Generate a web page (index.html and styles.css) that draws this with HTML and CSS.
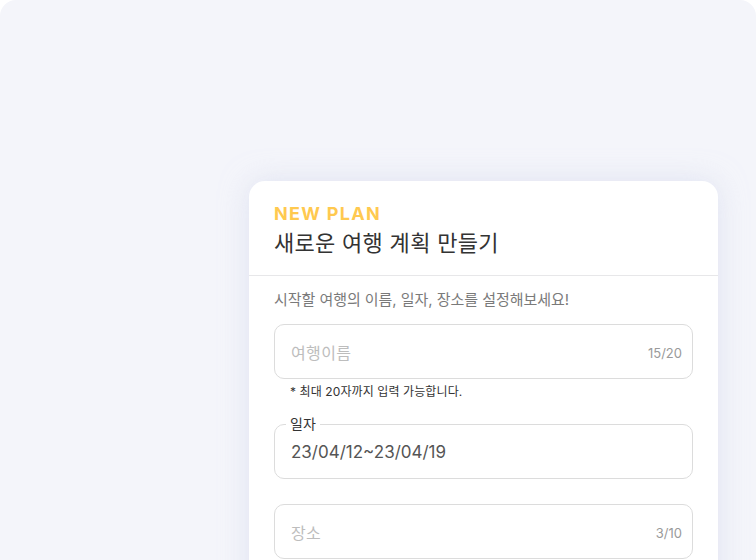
FILE: index.html
```html
<!DOCTYPE html>
<html lang="ko">
<head>
<meta charset="utf-8">
<link rel="stylesheet" href="styles.css">
</head>
<body>
<div class="stage">
  <section class="card">
    <header class="card-head">
      <div class="kicker">NEW PLAN</div>
      <h1 class="title">새로운 여행 계획 만들기</h1>
    </header>
    <div class="card-body">
      <p class="lead">시작할 여행의 이름, 일자, 장소를 설정해보세요!</p>

      <div class="field">
        <span class="placeholder">여행이름</span>
        <span class="counter">15/20</span>
      </div>
      <p class="helper">* 최대 20자까지 입력 가능합니다.</p>

      <fieldset class="field field-legend">
        <legend class="legend">일자</legend>
        <span class="value">23/04/12~23/04/19</span>
      </fieldset>

      <div class="field field-place">
        <span class="placeholder">장소</span>
        <span class="counter">3/10</span>
      </div>
    </div>
  </section>
</div>
</body>
</html>
```

FILE: styles.css
```css
* { box-sizing: border-box; }

html, body {
  margin: 0;
  background: #ffffff;
}

body {
  font-family: Inter, "Noto Sans CJK KR", sans-serif;
  width: 756px;
  height: 560px;
  overflow: hidden;
}

.stage {
  height: 560px;
  background: #f4f5fa;
  border-radius: 16px 16px 0 0;
  padding: 181px 0 0 249px;
  overflow: hidden;
}

.card {
  width: 469px;
  height: 420px;
  background: #ffffff;
  border-radius: 16px 16px 0 0;
  box-shadow: 0 0 28px rgba(205, 211, 235, 0.55);
}

.card-head {
  height: 95px;
  padding: 23px 25px 0;
  border-bottom: 1px solid #e7e7e9;
}

.kicker {
  font-family: Inter, sans-serif;
  font-weight: 700;
  font-size: 18px;
  line-height: 20px;
  letter-spacing: 1.3px;
  color: #ffc94f;
}

.title {
  margin: 2px 0 0;
  font-family: "Noto Sans CJK KR", sans-serif;
  font-weight: 400;
  font-size: 22px;
  line-height: 30px;
  letter-spacing: 0.3px;
  color: #333333;
}

.card-body {
  padding: 13px 25px 0;
}

.lead {
  margin: 0;
  font-size: 15px;
  line-height: 22px;
  letter-spacing: -0.05px;
  color: #7a7a7a;
}

.field {
  display: flex;
  align-items: center;
  justify-content: space-between;
  height: 55px;
  border: 1px solid #dcdcdc;
  border-radius: 10px;
  padding: 0 10px 0 16px;
}

.lead + .field { margin-top: 13px; }

.placeholder {
  font-size: 16px;
  letter-spacing: 0.4px;
  color: #bdbdbd;
}

.counter {
  font-size: 13px;
  color: #9a9a9a;
  padding-top: 2px;
}

.helper {
  margin: 4px 0 0 16px;
  font-size: 12px;
  line-height: 18px;
  letter-spacing: 0.1px;
  color: #333333;
}

.field-legend {
  display: block;
  margin: 15px 0 0;
  min-width: 0;
  height: 63px;
  padding: 0 16px;
}

.legend {
  padding: 0 4px;
  margin-left: -5px;
  font-size: 14px;
  line-height: 16px;
  color: #333333;
}

.value {
  display: block;
  margin-top: 8px;
  font-size: 17px;
  line-height: 24px;
  color: #555555;
}

.field-place {
  margin-top: 25px;
}
```
